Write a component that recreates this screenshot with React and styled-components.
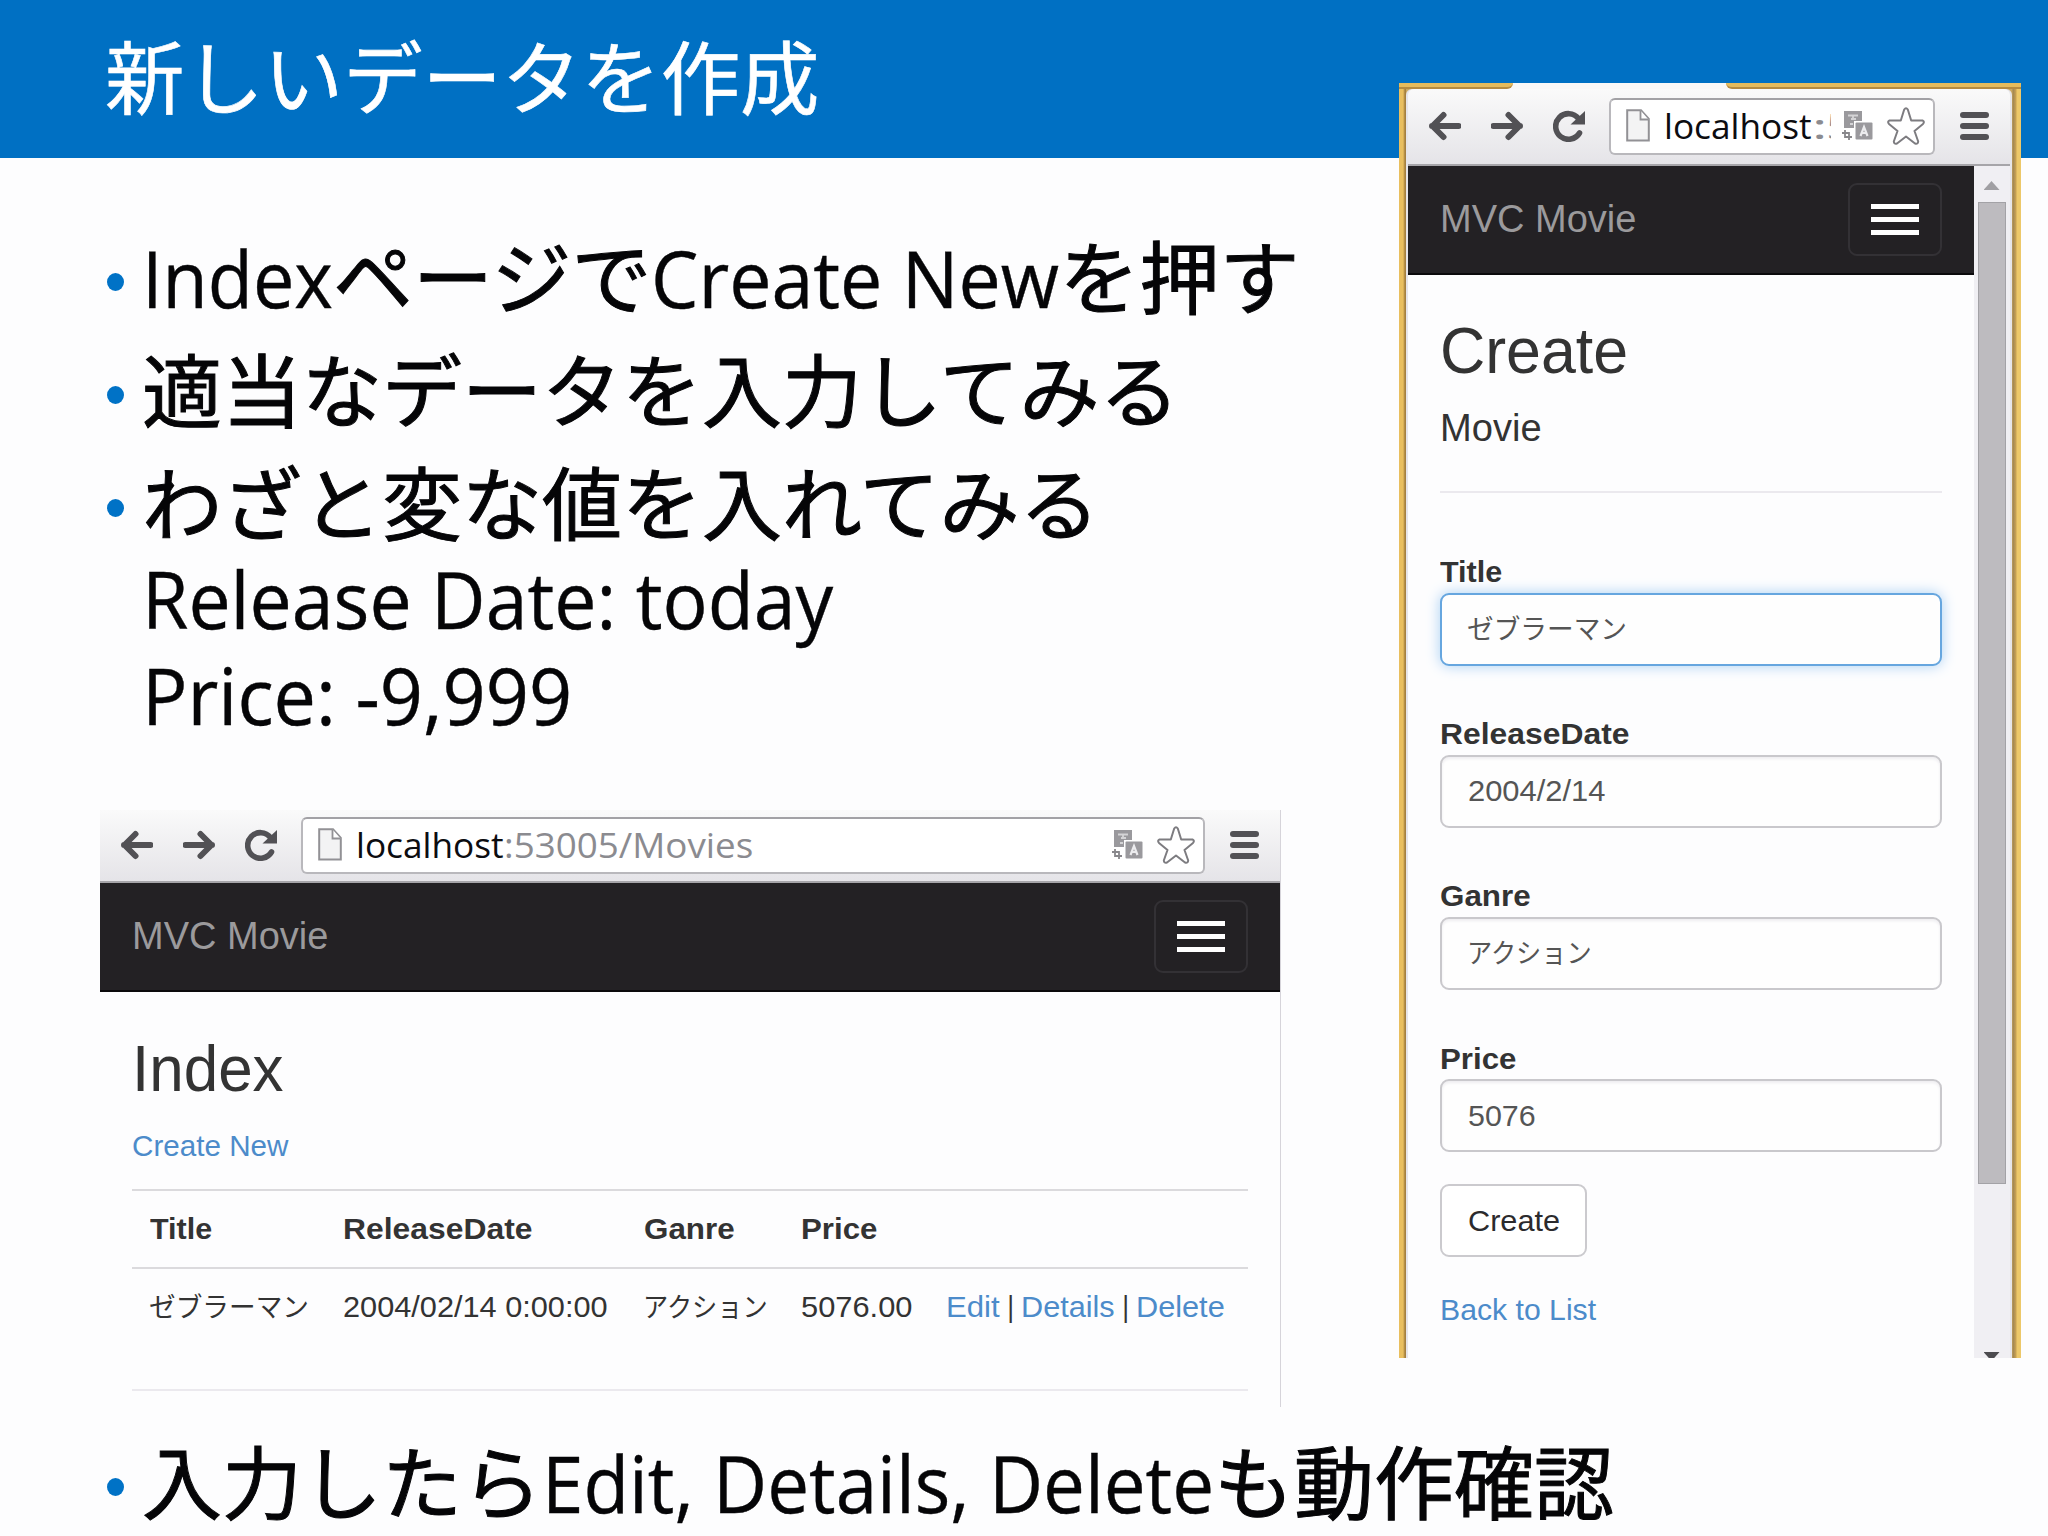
import React, { useLayoutEffect, useRef, useState } from "react";
import styled, { createGlobalStyle } from "styled-components";

const GlobalStyle = createGlobalStyle`
    * { box-sizing: border-box; }
    body { margin: 0; background: #fdfdfe; }
`;

const sans = `"Liberation Sans", Arial, "Noto Sans CJK JP", sans-serif`;
const humanist = `"Open Sans", "Noto Sans", "Noto Sans CJK JP", sans-serif`;

/* text squeezed or widened to a given width */
const FitBox = styled.span`
    display: inline-block;
    flex: none;
    width: ${({ $width }) => $width}px;
    line-height: 1;
    white-space: pre;
`;

const FitText = styled.span`
    display: inline-block;
    transform-origin: 0 50%;
`;

const Fit = ({ width, className, children }) => {
    const ref = useRef(null);
    const [scale, setScale] = useState(1);
    useLayoutEffect(() => {
        setScale(width / ref.current.offsetWidth);
    }, [width]);
    return (
        <FitBox $width={width} className={className}>
            <FitText ref={ref} style={{ transform: `scaleX(${scale})` }}>{children}</FitText>
        </FitBox>
    );
};

const Slide = styled.main`
    position: relative;
    width: 2048px;
    height: 1536px;
    overflow: hidden;
    background: #fdfdfe;
`;

const Header = styled.header`
    height: 158px;
    padding: 13.5px 0 0 105px;
    background: #0070c3;
`;

const Heading = styled.h1`
    margin: 0;
    font: 400 79.4px/120px "Noto Sans CJK JP", sans-serif;
    color: #fff;
    -webkit-text-stroke: 0.6px #fff;
`;

const Bullets = styled.ul`
    display: flex;
    flex-direction: column;
    gap: 17.5px;
    margin: 0;
    padding: ${({ $top }) => $top}px 0 0 107px;
    list-style: none;
    font: 400 80px/95.4px ${humanist};
    color: #050507;
    -webkit-text-stroke: 1px #050507;
`;

const Bullet = styled.li`
    display: flex;
    white-space: nowrap;

    &::before {
        content: "";
        flex: none;
        width: 17px;
        height: 18px;
        margin: 44px 18px 0 0;
        border-radius: 50%;
        background: #0072c6;
    }
`;

const Latin = styled(Fit)`
    font-size: 78px;
    -webkit-text-stroke: 0.4px #050507;
`;

const Browser = styled.section`
    width: 1181px;
    height: 597px;
    margin: 69px 0 0 100px;
    border-right: 1px solid #d6d4da;
    font-family: ${sans};
    color: #333;
`;

const Bar = styled.div`
    display: flex;
    align-items: center;
    height: ${({ $height }) => $height}px;
    padding: 0 21px 1px;
    background: linear-gradient(#fafafa, #e5e4e8);
    border-bottom: 2px solid #a6a5a9;
    border-radius: ${({ $rounded }) => ($rounded ? "6px 6px 0 0" : 0)};
`;

const BarIcon = styled.svg`
    flex: none;
    width: 32px;
    height: 32px;
    margin-right: ${({ $gap }) => $gap}px;
`;

const Address = styled.div`
    display: flex;
    flex: 1;
    align-items: center;
    min-width: 0;
    height: 57px;
    margin-right: 25px;
    padding: 0 8px 0 15px;
    border: 2px solid #b9b8bc;
    border-top-color: #a2a1a5;
    border-radius: 6px;
    background: #fff;
`;

const Url = styled.div`
    flex: 1;
    min-width: 0;
    margin: 0 11px 0 14px;
    overflow: hidden;
    font: 400 35px/48px ${humanist};
    color: #8b8b90;
    white-space: nowrap;
`;

const Host = styled(Fit)`
    color: #0c0c10;
`;

const MenuIcon = styled.span`
    display: grid;
    flex: none;
    gap: 5px;
    width: 29px;

    i {
        height: 6px;
        border-radius: 3px;
        background: #525155;
    }
`;

const Arrow = ({ flip }) => (
    <BarIcon viewBox="0 0 32 32" $gap={30}>
        <path
            d="M3 16H29.5M14.5 5L3.5 16L14.5 27"
            fill="none"
            stroke="#525155"
            strokeWidth="6"
            strokeLinecap="round"
            strokeLinejoin="round"
            transform={flip ? "matrix(-1 0 0 1 32 0)" : undefined}
        />
    </BarIcon>
);

const Reload = () => (
    <BarIcon viewBox="0 0 32 32" $gap={24}>
        <path d="M25.5 8.5A12.8 12.8 0 1 0 26.5 23" fill="none" stroke="#525155" strokeWidth="5.6" strokeLinecap="round" />
        <path d="M32 1V14.5H17.5Z" fill="#525155" />
    </BarIcon>
);

const PageGlyph = styled.svg`
    flex: none;
    width: 24px;
    height: 34px;
`;

const TranslateGlyph = styled.svg`
    flex: none;
    width: 31px;
    height: 30px;
    margin-right: 14px;
`;

const StarGlyph = styled.svg`
    flex: none;
    width: 38px;
    height: 38px;
`;

const Toolbar = ({ height, rounded, children }) => (
    <Bar $height={height} $rounded={rounded}>
        <Arrow />
        <Arrow flip />
        <Reload />
        <Address>
            <PageGlyph viewBox="0 0 24 34">
                <path d="M1.2 1.2H15L22.8 10V31.5H1.2Z" fill="#f3f3f4" stroke="#929195" strokeWidth="2" />
                <path d="M14.5 1.5V10.5H22.5" fill="#fff" stroke="#929195" strokeWidth="1.8" />
            </PageGlyph>
            <Url>{children}</Url>
            <TranslateGlyph viewBox="0 0 31 30">
                <path d="M2 0H20V10H12V17H2Z" fill="#9a999d" />
                <path d="M6 4.5H16M9 8H14M11 4V8M8 13H11" stroke="#d4d4d6" strokeWidth="1.8" />
                <rect x="13.5" y="11.5" width="17" height="17" rx="1" fill="#9a999d" />
                <path d="M18.5 25L22 16L25.5 25M19.5 22H24.5" fill="none" stroke="#ececee" strokeWidth="2.2" />
                <path d="M0 22H7V29M3 19V26H10" fill="none" stroke="#88878b" strokeWidth="1.8" />
            </TranslateGlyph>
            <StarGlyph viewBox="0 0 38 38">
                <path
                    d="M17.2 2.5Q19 0 20.8 2.5L24.2 13.5H35.5Q38 14.5 36 17L27.5 24L31.2 34.5Q31 37.5 28 36.5L19 29.5L10 36.5Q7 37.5 6.8 34.5L10.5 24L2 17Q0 14.5 2.5 13.5H13.8Z"
                    fill="#fff"
                    stroke="#7d7c80"
                    strokeWidth="2"
                    strokeLinejoin="round"
                />
            </StarGlyph>
        </Address>
        <MenuIcon><i /><i /><i /></MenuIcon>
    </Bar>
);

const Navbar = styled.nav`
    display: flex;
    align-items: center;
    justify-content: space-between;
    height: 109px;
    padding: 0 32px;
    border-bottom: 2px solid #0b0a0c;
    background: #232124;
    font-size: 38.5px;
    color: #9b9a9c;
`;

const Toggle = styled.div`
    display: grid;
    align-content: center;
    justify-content: center;
    gap: 8px;
    width: 94px;
    height: 73px;
    border: 2px solid #333135;
    border-radius: 9px;

    i {
        width: 48px;
        height: 5px;
        background: #fff;
    }
`;

const Nav = () => (
    <Navbar>
        <Fit width={196.5}>MVC Movie</Fit>
        <Toggle><i /><i /><i /></Toggle>
    </Navbar>
);

const Content = styled.div`
    padding: ${({ $top = 41 }) => $top}px 32px 0;
    font-size: 30px;
    line-height: 42.7px;
`;

const PageTitle = styled.h2`
    margin: 0;
    font-size: 64px;
    font-weight: 400;
    line-height: 70px;
`;

const Subtitle = styled.h4`
    margin: 21px 0 0;
    font-size: 38.5px;
    font-weight: 400;
    line-height: 42.3px;
`;

const Rule = styled.hr`
    height: 2px;
    margin: ${({ $top }) => $top}px 0 0;
    border: 0;
    background: #ebe9ee;
`;

const Link = styled.a`
    color: #4c8bca;
`;

const LinkLine = styled.p`
    margin: ${({ $top }) => $top}px 0 0;
`;

const Table = styled.div`
    margin-top: 21px;
`;

const Row = styled.div`
    display: grid;
    grid-template-columns: 192.5px 301px 157.5px 145px auto;
    padding: 17px 0 17px 18px;
    border-top: 2px solid #dbdadd;
    font-weight: ${({ $head }) => ($head ? 700 : 400)};
`;

const Kana = styled(Fit)`
    margin: 0 0 4px -1px;
    font: 400 27px/1 "Noto Sans CJK JP", sans-serif;
`;

const IndexWindow = () => (
    <Browser>
        <Toolbar height={73}>
            <Host width={148}>localhost</Host>
            <Fit width={249}>:53005/Movies</Fit>
        </Toolbar>
        <Nav />
        <Content $top={42}>
            <PageTitle><Fit width={152}>Index</Fit></PageTitle>
            <LinkLine $top={21}><Link><Fit width={156}>Create New</Fit></Link></LinkLine>
            <Table>
                <Row $head>
                    <span><Fit width={62}>Title</Fit></span>
                    <span><Fit width={189}>ReleaseDate</Fit></span>
                    <span><Fit width={91}>Ganre</Fit></span>
                    <span><Fit width={76}>Price</Fit></span>
                </Row>
                <Row>
                    <span><Kana width={160}>ゼブラーマン</Kana></span>
                    <span><Fit width={265}>2004/02/14 0:00:00</Fit></span>
                    <span><Kana width={125}>アクション</Kana></span>
                    <span><Fit width={111}>5076.00</Fit></span>
                    <span>
                        <Link><Fit width={54}>Edit</Fit></Link>
                        <Fit width={21}> | </Fit>
                        <Link><Fit width={94}>Details</Fit></Link>
                        <Fit width={21}> | </Fit>
                        <Link><Fit width={89}>Delete</Fit></Link>
                    </span>
                </Row>
            </Table>
            <Rule $top={43} />
        </Content>
    </Browser>
);

/* floats above the slide, overlapping the header */
const Frame = styled.section`
    position: absolute;
    left: 1399px;
    top: 83px;
    width: 622px;
    height: 1275px;
    overflow: hidden;
    padding: 0 7px;
    background: linear-gradient(90deg, #e9bf5f 0 4px, #a5803f 6px 7px, #c9a761 7px 613px, #a08552 614px, #c9a253 617px, #edc869 618px);
    font-family: ${sans};
    color: #333;
`;

const TabStrip = styled.div`
    display: flex;
    justify-content: space-between;
    height: 6px;
    margin: 0 -7px;
    background: #f9f8f7;

    &::before,
    &::after {
        content: "";
        width: 114px;
        border-bottom: 2px solid #b58b40;
        border-radius: 0 0 6px 0;
        background: #e5bb5c;
    }

    &::after {
        width: 295px;
        border-radius: 0 0 0 6px;
    }
`;

const Inner = styled.div`
    width: 606px;
    padding: 0 2px;
    border-radius: 6px 6px 0 0;
    background: #e6e5e9;
`;

const Viewport = styled.div`
    display: flex;
    height: 1192px;
    background: #fdfdfe;
`;

const Page = styled.div`
    width: 566px;
`;

const Scrollbar = styled.div`
    display: flex;
    flex: 1;
    flex-direction: column;
    align-items: center;
    justify-content: space-between;
    padding: 15px 1px 0 0;
    background: #f0eff3;
`;

const ScrollArrow = styled.i`
    width: 16px;
    height: 9px;
    background: ${({ $down }) => ($down ? "#4c4b4f" : "#a09fa3")};
    clip-path: ${({ $down }) => ($down ? "polygon(0 0, 100% 0, 50% 100%)" : "polygon(50% 0, 100% 100%, 0 100%)")};
    margin-bottom: ${({ $down }) => ($down ? -3 : 0)}px;
`;

const Thumb = styled.div`
    width: 28px;
    height: 982px;
    margin: 12px 0 auto;
    border: 1px solid #a3a2a6;
    background: #bdbbbf;
`;

const Field = styled.label`
    display: block;
    height: 162.3px;
    font-weight: 700;
`;

const Input = styled.div`
    display: flex;
    align-items: center;
    width: 502px;
    height: 73px;
    margin-top: -1px;
    padding-left: 26px;
    border: 2px solid ${({ $focus }) => ($focus ? "#66a6df" : "#c9c8cc")};
    border-radius: 9px;
    background: #fefefe;
    box-shadow: ${({ $focus }) => ($focus ? "0 0 14px #a9d0f4" : "inset 0 2px 3px #eeedf0")};
    font-weight: 400;
    color: #555;
`;

const Form = styled.div`
    margin-top: 58px;
`;

const Button = styled.div`
    display: flex;
    align-items: center;
    width: 147px;
    height: 73px;
    margin-top: -15.5px;
    padding-left: 26px;
    border: 2px solid #cbcace;
    border-radius: 9px;
    background: #fff;
    color: #2b2a2d;
`;

const CreateWindow = () => (
    <Frame>
        <TabStrip />
        <Inner>
            <Toolbar height={77} rounded>
                <Host width={148}>localhost</Host>
                <Fit width={15}>:</Fit>
                <Fit width={20}>5</Fit>
            </Toolbar>
            <Viewport>
                <Page>
                    <Nav />
                    <Content>
                        <PageTitle><Fit width={188}>Create</Fit></PageTitle>
                        <Subtitle><Fit width={102}>Movie</Fit></Subtitle>
                        <Rule $top={41.5} />
                        <Form>
                            <Field>
                                <Fit width={62}>Title</Fit>
                                <Input $focus><Kana width={160}>ゼブラーマン</Kana></Input>
                            </Field>
                            <Field>
                                <Fit width={189}>ReleaseDate</Fit>
                                <Input><Fit width={137}>2004/2/14</Fit></Input>
                            </Field>
                            <Field>
                                <Fit width={91}>Ganre</Fit>
                                <Input><Kana width={125}>アクション</Kana></Input>
                            </Field>
                            <Field>
                                <Fit width={76}>Price</Fit>
                                <Input><Fit width={68}>5076</Fit></Input>
                            </Field>
                            <Button><Fit width={92}>Create</Fit></Button>
                        </Form>
                        <LinkLine $top={31.5}><Link><Fit width={156}>Back to List</Fit></Link></LinkLine>
                    </Content>
                </Page>
                <Scrollbar>
                    <ScrollArrow />
                    <Thumb />
                    <ScrollArrow $down />
                </Scrollbar>
            </Viewport>
        </Inner>
    </Frame>
);

const App = () => (
    <>
        <GlobalStyle />
        <Slide>
            <Header>
                <Heading>新しいデータを作成</Heading>
            </Header>
            <Bullets $top={71}>
                <Bullet>
                    <div><Latin width={191}>Index</Latin>ページで<Latin width={408}>Create New</Latin>を押す</div>
                </Bullet>
                <Bullet>
                    <div>適当なデータを入力してみる</div>
                </Bullet>
                <Bullet>
                    <div>
                        わざと変な値を入れてみる<br />
                        <Latin width={691}>Release Date: today</Latin><br />
                        <Latin width={430}>Price: -9,999</Latin>
                    </div>
                </Bullet>
            </Bullets>
            <IndexWindow />
            <Bullets $top={27}>
                <Bullet>
                    <div>入力したら<Latin width={672}>Edit, Details, Delete</Latin>も動作確認</div>
                </Bullet>
            </Bullets>
            <CreateWindow />
        </Slide>
    </>
);

export default App;
